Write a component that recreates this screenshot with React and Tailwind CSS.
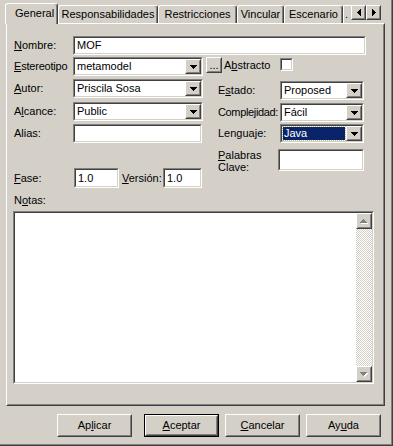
const sunkenOuter = "border border-t-[#808080] border-l-[#808080] border-b-white border-r-white";
const sunkenInner = "border border-t-[#404040] border-l-[#404040] border-b-[#d4d0c8] border-r-[#d4d0c8]";
const raisedOuter = "border border-t-white border-l-white border-b-[#404040] border-r-[#404040]";
const raisedInner = "border border-t-[#d4d0c8] border-l-[#d4d0c8] border-b-[#808080] border-r-[#808080]";

function Sunken({ className = "", inner = "", children }) {
  return (
    <div className={`${sunkenOuter} ${className}`}>
      <div className={`${sunkenInner} h-full w-full bg-white ${inner}`}>{children}</div>
    </div>
  );
}

function Raised({ className = "", inner = "", children }) {
  return (
    <div className={`${raisedOuter} ${className}`}>
      <div className={`${raisedInner} h-full w-full ${inner}`}>{children}</div>
    </div>
  );
}

function Tri({ dir, color = "#000" }) {
  const d = {
    down: "M0 0h7v1h-1v1h-1v1h-1v1h-1v-1h-1v-1h-1v-1h-1z",
    up: "M3 0h1v1h1v1h1v1h1v1h-7v-1h1v-1h1v-1h1z",
    left: "M3 0h1v7h-1v-1h-1v-1h-1v-1h-1v-1h1v-1h1v-1h1z",
    right: "M0 0h1v1h1v1h1v1h1v1h-1v1h-1v1h-1v1h-1z",
  }[dir];
  const vert = dir === "left" || dir === "right";
  return (
    <svg width={vert ? 4 : 7} height={vert ? 7 : 4} className="block" shapeRendering="crispEdges">
      <path d={d} fill={color} />
    </svg>
  );
}

function DisabledTri({ dir }) {
  return (
    <div className="relative w-[8px] h-[5px]">
      <div className="absolute left-[1px] top-[1px]">
        <Tri dir={dir} color="#ffffff" />
      </div>
      <div className="absolute left-0 top-0">
        <Tri dir={dir} color="#808080" />
      </div>
    </div>
  );
}

function Select({ value, w, highlight }) {
  return (
    <Sunken className={`${w} h-[19px]`} inner="flex">
      {highlight ? (
        <div className="flex-1 flex items-center m-[1px] pl-[1px] bg-[#0a246a] text-white outline outline-1 outline-dotted outline-[#c0c080]">
          {value}
        </div>
      ) : (
        <div className="flex-1 flex items-center pl-[2px]">{value}</div>
      )}
      <Raised className="w-[16px] h-full bg-[#d4d0c8]" inner="flex items-center justify-center">
        <Tri dir="down" />
      </Raised>
    </Sunken>
  );
}

function Tab({ label, w, selected }) {
  if (selected) {
    return (
      <div
        className={`relative z-10 mb-[-1px] h-[21px] ${w} bg-[#d4d0c8] border-t border-l border-r border-t-white border-l-white border-r-[#404040] rounded-t-[3px] shadow-[inset_-1px_0_0_#808080] pl-[9px] pt-[3px]`}
      >
        {label}
      </div>
    );
  }
  return (
    <div
      className={`h-[18px] ${w} border-t border-l border-r border-t-white border-l-white border-r-[#404040] rounded-t-[3px] shadow-[inset_-1px_0_0_#808080] flex justify-center pt-[2px] overflow-hidden whitespace-nowrap`}
    >
      {label}
    </div>
  );
}

function Label({ children, w }) {
  return <div className={`${w} shrink-0 flex items-center whitespace-nowrap`}>{children}</div>;
}

function Button({ children, def, ml }) {
  const btn = (
    <Raised className="w-full h-full bg-[#d4d0c8]" inner="flex items-center justify-center">
      {children}
    </Raised>
  );
  if (def) {
    return <div className={`${ml} w-[75px] h-[23px] border border-black`}>{btn}</div>;
  }
  return <div className={`${ml} w-[75px] h-[23px]`}>{btn}</div>;
}

export default function App() {
  return (
    <div className="w-[393px] h-[446px] bg-[#d4d0c8] font-['Liberation_Sans',Arial,sans-serif] text-[11px] leading-[13px] text-black border-r border-b border-r-[#404040] border-b-[#404040] overflow-hidden">
      <div className="w-full h-full border-r border-b border-r-[#808080] border-b-[#808080] flex flex-col">
        {/* tabs */}
        <div className="flex items-end h-[23px] pl-[5px]">
          <Tab label="General" w="w-[53px]" selected />
          <Tab label="Responsabilidades" w="w-[100px]" />
          <Tab label="Restricciones" w="w-[79px]" />
          <Tab label="Vincular" w="w-[47px]" />
          <Tab label="Escenario" w="w-[59px]" />
          <div className="h-[18px] w-[8px] border-t border-l border-t-white border-l-white overflow-hidden pl-[1px] pt-[2px]">.</div>
          <div className="flex mb-[3px]">
            <Raised className="w-[15px] h-[15px] bg-[#d4d0c8]" inner="flex items-center justify-center">
              <Tri dir="left" />
            </Raised>
            <Raised className="w-[15px] h-[15px] bg-[#d4d0c8]" inner="flex items-center justify-center">
              <Tri dir="right" />
            </Raised>
          </div>
        </div>

        {/* panel */}
        <Raised className="ml-[6px] w-[379px] h-[383px]" inner="pl-[6px] pt-[11px] flex flex-col">
          <div className="flex h-[19px]">
            <Label w="w-[59px]">
              <span><u>N</u>ombre:</span>
            </Label>
            <Sunken className="w-[293px] h-[19px]" inner="flex items-center pl-[2px]">MOF</Sunken>
          </div>

          <div className="flex items-start h-[19px] mt-[2px]">
            <Label w="w-[59px] h-[19px] tracking-[-0.2px]">
              <span><u>E</u>stereotipo</span>
            </Label>
            <Select value="metamodel" w="w-[130px]" />
            <Raised className="ml-[3px] w-[16px] h-[16px] bg-[#d4d0c8]" inner="flex items-end justify-center pb-[2px] leading-[8px]">
              ...
            </Raised>
            <div className="ml-[2px] w-[56px] h-[16px] flex items-center">
              <span>A<u>b</u>stracto</span>
            </div>
            <Sunken className="w-[13px] h-[13px] mt-[1px]" />
          </div>

          <div className="flex mt-[3px]">
            <div className="w-[189px] flex flex-col">
              <div className="flex h-[19px]">
                <Label w="w-[59px]">
                  <span><u>A</u>utor:</span>
                </Label>
                <Select value="Priscila Sosa" w="w-[130px]" />
              </div>
              <div className="flex h-[19px] mt-[4px]">
                <Label w="w-[59px]">
                  <span>A<u>l</u>cance:</span>
                </Label>
                <Select value="Public" w="w-[130px]" />
              </div>
              <div className="flex h-[19px] mt-[3px]">
                <Label w="w-[59px]">Alias:</Label>
                <Sunken className="w-[129px] h-[19px]" />
              </div>
              <div className="flex h-[20px] mt-[25px]">
                <Label w="w-[60px]">
                  <span><u>F</u>ase:</span>
                </Label>
                <Sunken className="w-[45px] h-[20px]" inner="flex items-center pl-[2px]">1.0</Sunken>
                <Label w="w-[44px] pl-[3px]">
                  <span><u>V</u>ersión:</span>
                </Label>
                <Sunken className="w-[39px] h-[20px]" inner="flex items-center pl-[2px]">1.0</Sunken>
              </div>
            </div>

            <div className="ml-[15px] flex flex-col">
              <div className="flex h-[19px] mt-[2px]">
                <Label w="w-[62px]">
                  <span>E<u>s</u>tado:</span>
                </Label>
                <Select value="Proposed" w="w-[84px]" />
              </div>
              <div className="flex h-[19px] mt-[3px]">
                <Label w="w-[62px] tracking-[-0.35px]">Complejidad:</Label>
                <Select value="Fácil" w="w-[84px]" />
              </div>
              <div className="flex h-[19px] mt-[2px]">
                <Label w="w-[62px]">Lenguaje:</Label>
                <Select value="Java" w="w-[84px]" highlight />
              </div>
              <div className="flex mt-[5px]">
                <div className="w-[60px] leading-[12px] pt-[1px]">
                  <div><u>P</u>alabras</div>
                  <div>Clave:</div>
                </div>
                <Sunken className="w-[86px] h-[22px] mt-[1px]" />
              </div>
            </div>
          </div>

          <div className="mt-[6px]">
            N<u>o</u>tas:
          </div>
          <Sunken className="mt-[4px] -ml-[1px] w-[361px] h-[173px]" inner="flex justify-end">
            <div className="w-[16px] h-full flex flex-col bg-[repeating-conic-gradient(#d4d0c8_0_25%,#ffffff_0_50%)] bg-[length:2px_2px]">
              <Raised className="w-[16px] h-[16px] bg-[#d4d0c8]" inner="flex items-center justify-center">
                <DisabledTri dir="up" />
              </Raised>
              <div className="flex-1" />
              <Raised className="w-[16px] h-[16px] bg-[#d4d0c8]" inner="flex items-center justify-center">
                <DisabledTri dir="down" />
              </Raised>
            </div>
          </Sunken>
        </Raised>

        {/* buttons */}
        <div className="flex mt-[8px]">
          <Button ml="ml-[57px]">
            <span>Ap<u>l</u>icar</span>
          </Button>
          <Button ml="ml-[12px]" def>
            <span><u>A</u>ceptar</span>
          </Button>
          <Button ml="ml-[6px]">
            <span><u>C</u>ancelar</span>
          </Button>
          <Button ml="ml-[6px]">
            <span>Ay<u>u</u>da</span>
          </Button>
        </div>
      </div>
    </div>
  );
}
